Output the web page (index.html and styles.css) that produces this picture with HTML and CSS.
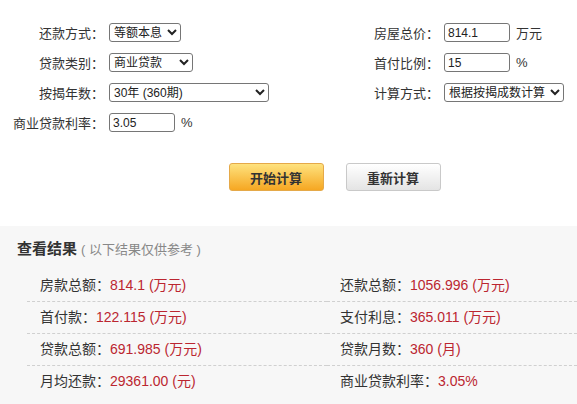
FILE: index.html
```html
<!DOCTYPE html>
<html lang="zh-CN">
<head>
    <meta charset="UTF-8" />
    <meta name="viewport" content="width=device-width, initial-scale=1.0"/>
    <title>房贷计算器</title>
    <link rel="stylesheet" href="styles.css">
</head>
<body>

<div class="calc">
    <div class="calc-form">
        <div class="col col-left">
            <div class="row">
                <label>还款方式：</label>
                <select class="sel-way">
                    <option>等额本息</option>
                    <option>等额本金</option>
                </select>
            </div>
            <div class="row">
                <label>贷款类别：</label>
                <select class="sel-type">
                    <option>商业贷款</option>
                    <option>公积金贷款</option>
                    <option>组合贷款</option>
                </select>
            </div>
            <div class="row">
                <label>按揭年数：</label>
                <select class="sel-years">
                    <option>30年 (360期)</option>
                    <option>20年 (240期)</option>
                </select>
            </div>
            <div class="row">
                <label>商业贷款利率：</label>
                <input type="text" class="ipt" value="3.05">
                <span class="unit">%</span>
            </div>
        </div>
        <div class="col col-right">
            <div class="row">
                <label>房屋总价：</label>
                <input type="text" class="ipt" value="814.1">
                <span class="unit">万元</span>
            </div>
            <div class="row">
                <label>首付比例：</label>
                <input type="text" class="ipt" value="15">
                <span class="unit">%</span>
            </div>
            <div class="row">
                <label>计算方式：</label>
                <select class="sel-mode">
                    <option>根据按揭成数计算</option>
                    <option>根据贷款总额计算</option>
                </select>
            </div>
        </div>
    </div>

    <div class="btns">
        <button class="btn btn-start">开始计算</button>
        <button class="btn btn-reset">重新计算</button>
    </div>
</div>

<div class="result">
    <h3 class="result-title">查看结果<span>( 以下结果仅供参考 )</span></h3>
    <ul class="result-list">
        <li>房款总额：<em>814.1 (万元)</em></li>
        <li>还款总额：<em>1056.996 (万元)</em></li>
        <li>首付款：<em>122.115 (万元)</em></li>
        <li>支付利息：<em>365.011 (万元)</em></li>
        <li>贷款总额：<em>691.985 (万元)</em></li>
        <li>贷款月数：<em>360 (月)</em></li>
        <li class="last">月均还款：<em>29361.00 (元)</em></li>
        <li class="last">商业贷款利率：<em>3.05%</em></li>
    </ul>
</div>

</body>
</html>
```

FILE: styles.css
```css
body {
    margin: 0;
    font-family: 'Liberation Sans', 'Noto Sans CJK JP', sans-serif;
    font-size: 13px;
    color: #333;
    background: #fff;
}

.calc {
    padding-top: 23px;
}

.calc-form {
    display: flex;
}

.col {
    display: flex;
    flex-direction: column;
    gap: 11px;
}

.col-left {
    width: 336px;
}

.row {
    display: flex;
    align-items: center;
    height: 19px;
}

.row label {
    text-align: right;
    padding-right: 5px;
    color: #333;
    white-space: nowrap;
}

.col-left label {
    width: 104px;
}

.col-right label {
    width: 103px;
}

select,
.ipt {
    font-family: 'Liberation Sans', 'Noto Sans CJK JP', sans-serif;
    font-size: 12px;
    color: #222;
    height: 19px;
    box-sizing: border-box;
    border: 1px solid #767676;
    border-radius: 3px;
    background: #fff;
    padding: 0;
    margin: 0;
}

.sel-way {
    width: 72px;
}

.sel-type {
    width: 84px;
}

.sel-years {
    width: 160px;
}

.sel-mode {
    width: 120px;
}

.ipt {
    width: 66px;
    padding: 0 3px;
}

.unit {
    margin-left: 6px;
}

.btns {
    display: flex;
    justify-content: center;
    gap: 22px;
    margin-top: 31px;
    padding-left: 92px;
}

.btn {
    width: 95px;
    height: 28px;
    font-family: 'Liberation Sans', 'Noto Sans CJK JP', sans-serif;
    font-size: 13px;
    font-weight: bold;
    color: #333;
    border-radius: 3px;
    cursor: pointer;
}

.btn-start {
    background: linear-gradient(#fee27e, #f6a722);
    border: 1px solid #e5a949;
}

.btn-reset {
    background: linear-gradient(#ffffff, #e4e4e4);
    border: 1px solid #c9c9c9;
}

.result {
    margin-top: 35px;
    background: #f7f7f7;
    padding: 13px 0 12px;
}

.result-title {
    margin: 0 0 0 17px;
    font-size: 15px;
    font-weight: bold;
    color: #333;
    line-height: 20px;
}

.result-title span {
    font-size: 13px;
    font-weight: normal;
    color: #888;
    margin-left: 4px;
}

.result-list {
    list-style: none;
    margin: 10px 0 0 27px;
    padding: 0;
    display: grid;
    grid-template-columns: 300px 1fr;
}

.result-list li {
    font-size: 14px;
    color: #333;
    height: 31px;
    line-height: 31px;
    padding-left: 13px;
    border-bottom: 1px dashed #d0d0d0;
}

.result-list li.last {
    border-bottom: none;
}

.result-list em {
    font-style: normal;
    color: #bb2630;
}
```
